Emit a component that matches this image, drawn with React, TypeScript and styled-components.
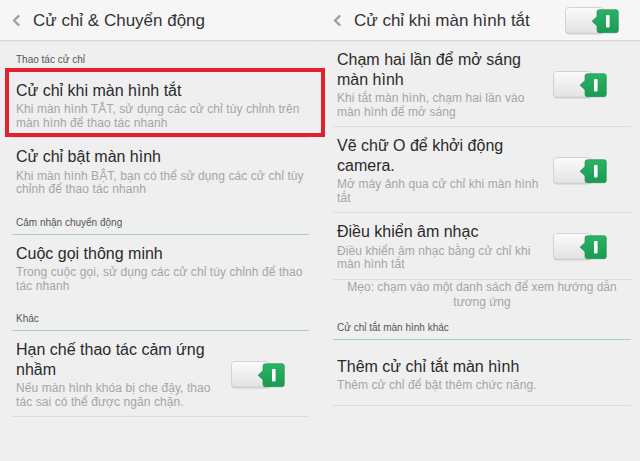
import React from 'react';
import styled, { createGlobalStyle, css } from 'styled-components';

const GlobalStyle = createGlobalStyle`
  html, body { margin: 0; padding: 0; background: #efefef; }
  body { font-family: "Liberation Sans", Arial, sans-serif; }
  * { box-sizing: border-box; }
`;

const Screen = styled.div`
  display: flex;
  width: 640px;
  height: 461px;
  overflow: hidden;
  background: #efefef;
`;

const Panel = styled.section`
  width: 320px;
  flex: none;
  display: flex;
  flex-direction: column;
`;

const Header = styled.header<{ $inset: number }>`
  height: 41px;
  flex: none;
  display: flex;
  align-items: center;
  padding: 1px 20px 0 ${p => p.$inset}px;
  background: #f6f6f6;
  border-bottom: 1px solid #dadada;
  box-shadow: 0 1px 1px rgba(0, 0, 0, 0.04);
`;

const HeaderTitle = styled.h1`
  flex: 1;
  margin: 0 0 0 13px;
  font-size: 17px;
  font-weight: normal;
  line-height: 20px;
  color: #333;
  white-space: nowrap;
`;

const Content = styled.div<{ $padL: number; $padR: number }>`
  display: flex;
  flex-direction: column;
  padding: 0 ${p => p.$padR}px 0 ${p => p.$padL}px;
`;

const SectionLabel = styled.div<{ $top?: number }>`
  font-size: 10px;
  line-height: 12px;
  color: #555;
  padding: ${p => p.$top ?? 13}px 0 5px 4px;
  border-bottom: 1px solid #a9cfc3;
`;

const Item = styled.div<{ $divider?: boolean; $highlight?: boolean; $tall?: boolean }>`
  position: relative;
  display: flex;
  align-items: center;
  gap: 10px;
  padding: ${p => (p.$tall ? '17px 23px 12px 4px' : '9px 23px 7px 4px')};
  border-bottom: ${p => (p.$divider ? '1px solid #dcdcdc' : 'none')};
  ${p =>
    p.$highlight &&
    css`
      &::after {
        content: '';
        position: absolute;
        left: -7px;
        right: -16px;
        top: -4px;
        bottom: 0;
        border: 4px solid #e1222c;
        z-index: 2;
        pointer-events: none;
      }
    `}
`;

const TextCol = styled.div`
  flex: 1;
  min-width: 0;
`;

const Title = styled.div`
  font-size: 16px;
  line-height: 19.5px;
  color: #2a2a2a;
  white-space: nowrap;
`;

const Sub = styled.div`
  margin-top: 3px;
  font-size: 12px;
  line-height: 13.5px;
  letter-spacing: 0.08px;
  color: #a5a5a5;
  white-space: nowrap;
`;

const Tip = styled.div`
  padding-top: 0.5px;
  text-align: center;
  font-size: 12px;
  line-height: 15px;
  color: #a5a5a5;
  white-space: nowrap;
`;

const ToggleBox = styled.svg`
  flex: none;
  display: block;
`;

const Back = () => (
  <svg width="8" height="11" viewBox="0 0 8 11">
    <polyline points="6.5,1.2 2,5.5 6.5,9.8" fill="none" stroke="#a0a0a0" strokeWidth="2.4" strokeLinecap="round" strokeLinejoin="round" />
  </svg>
);

const Toggle = ({ id }: { id: string }) => (
  <ToggleBox width="55" height="28" viewBox="0 0 55 28">
    <defs>
      <linearGradient id={`g${id}`} x1="0" y1="0" x2="0" y2="1">
        <stop offset="0" stopColor="#fbfbfb" />
        <stop offset="1" stopColor="#e3e3e3" />
      </linearGradient>
      <linearGradient id={`k${id}`} x1="0" y1="0" x2="0" y2="1">
        <stop offset="0" stopColor="#2bb366" />
        <stop offset="1" stopColor="#1a9a52" />
      </linearGradient>
    </defs>
    <rect x="0.5" y="2" width="38" height="25.5" rx="3" fill="#c4c4c4" opacity="0.7" />
    <rect x="0.5" y="0.5" width="38" height="25.5" rx="3" fill={`url(#g${id})`} stroke="#d2d2d2" />
    <path
      d="M27 14.2 L32 9.6 V5 Q32 2.7 34.3 2.7 H51 Q53.3 2.7 53.3 5 V23.4 Q53.3 25.7 51 25.7 H34.3 Q32 25.7 32 23.4 V18.8 Z"
      fill={`url(#k${id})`}
      stroke="#178a49"
      strokeWidth="0.6"
    />
    <rect x="41" y="8" width="3.6" height="12.4" rx="0.8" fill="#ffffff" />
  </ToggleBox>
);

export default function App() {
  return (
    <>
      <GlobalStyle />
      <Screen>
        <Panel>
          <Header $inset={12}>
            <Back />
            <HeaderTitle>Cử chỉ &amp; Chuyển động</HeaderTitle>
          </Header>
          <Content $padL={12} $padR={11}>
            <SectionLabel $top={12.5}>Thao tác cử chỉ</SectionLabel>
            <Item $divider $highlight>
              <TextCol>
                <Title>Cử chỉ khi màn hình tắt</Title>
                <Sub>
                  Khi màn hình TẮT, sử dụng các cử chỉ tùy chỉnh trên
                  <br />
                  màn hình để thao tác nhanh
                </Sub>
              </TextCol>
            </Item>
            <Item>
              <TextCol>
                <Title>Cử chỉ bật màn hình</Title>
                <Sub>
                  Khi màn hình BẬT, bạn có thể sử dụng các cử chỉ tùy
                  <br />
                  chỉnh để thao tác nhanh
                </Sub>
              </TextCol>
            </Item>
            <SectionLabel>Cảm nhận chuyển động</SectionLabel>
            <Item>
              <TextCol>
                <Title>Cuộc gọi thông minh</Title>
                <Sub>
                  Trong cuộc gọi, sử dụng các cử chỉ tùy chỉnh để thao
                  <br />
                  tác nhanh
                </Sub>
              </TextCol>
            </Item>
            <SectionLabel>Khác</SectionLabel>
            <Item $divider>
              <TextCol>
                <Title>
                  Hạn chế thao tác cảm ứng
                  <br />
                  nhầm
                </Title>
                <Sub>
                  Nếu màn hình khóa bị che đậy, thao
                  <br />
                  tác sai có thể được ngăn chặn.
                </Sub>
              </TextCol>
              <Toggle id="a" />
            </Item>
          </Content>
        </Panel>

        <Panel>
          <Header $inset={13}>
            <Back />
            <HeaderTitle>Cử chỉ khi màn hình tắt</HeaderTitle>
            <Toggle id="h" />
          </Header>
          <Content $padL={13} $padR={9}>
            <Item $divider>
              <TextCol>
                <Title>
                  Chạm hai lần để mở sáng
                  <br />
                  màn hình
                </Title>
                <Sub>
                  Khi tắt màn hình, chạm hai lần vào
                  <br />
                  màn hình để mở sáng
                </Sub>
              </TextCol>
              <Toggle id="b" />
            </Item>
            <Item $divider>
              <TextCol>
                <Title>
                  Vẽ chữ O để khởi động
                  <br />
                  camera.
                </Title>
                <Sub>
                  Mở máy ảnh qua cử chỉ khi màn hình
                  <br />
                  tắt
                </Sub>
              </TextCol>
              <Toggle id="c" />
            </Item>
            <Item $divider>
              <TextCol>
                <Title>Điều khiển âm nhạc</Title>
                <Sub>
                  Điều khiển âm nhạc bằng cử chỉ khi
                  <br />
                  màn hình tắt
                </Sub>
              </TextCol>
              <Toggle id="d" />
            </Item>
            <Tip>
              Mẹo: chạm vào một danh sách để xem hướng dẫn
              <br />
              tương ứng
            </Tip>
            <SectionLabel $top={11.5}>Cử chỉ tắt màn hình khác</SectionLabel>
            <Item $divider $tall>
              <TextCol>
                <Title>Thêm cử chỉ tắt màn hình</Title>
                <Sub>Thêm cử chỉ để bật thêm chức năng.</Sub>
              </TextCol>
            </Item>
          </Content>
        </Panel>
      </Screen>
    </>
  );
}
